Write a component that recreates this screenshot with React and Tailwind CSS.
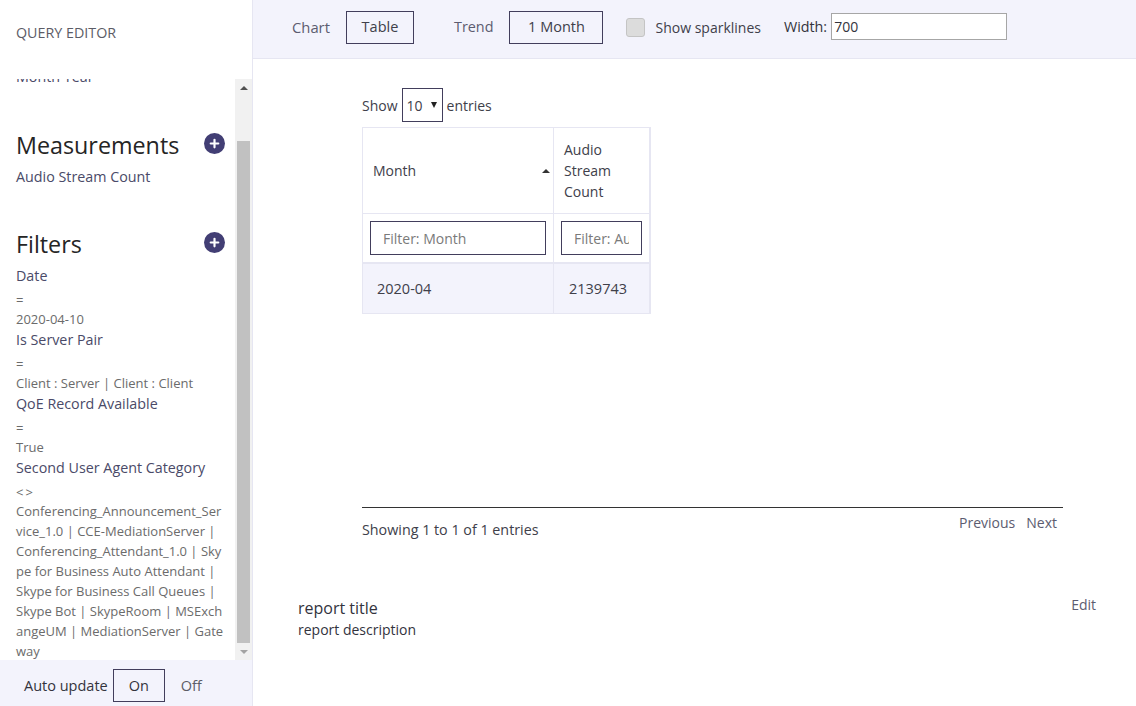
import { Plus } from 'lucide-react'

const font = { fontFamily: '"Open Sans", "Noto Sans", sans-serif' }

const filters = [
  { name: 'Date', op: '=', lines: ['2020-04-10'] },
  { name: 'Is Server Pair', op: '=', lines: ['Client : Server | Client : Client'] },
  { name: 'QoE Record Available', op: '=', lines: ['True'] },
  {
    name: 'Second User Agent Category',
    op: '<>',
    lines: [
      'Conferencing_Announcement_Ser',
      'vice_1.0 | CCE-MediationServer |',
      'Conferencing_Attendant_1.0 | Sky',
      'pe for Business Auto Attendant |',
      'Skype for Business Call Queues |',
      'Skype Bot | SkypeRoom | MSExch',
      'angeUM | MediationServer | Gate',
      'way',
    ],
  },
]

function AddButton() {
  return (
    <span className="flex h-[21px] w-[21px] items-center justify-center rounded-full bg-[#423e74]">
      <Plus className="h-[13px] w-[13px] text-white" strokeWidth={4} />
    </span>
  )
}

function Sidebar() {
  return (
    <aside className="flex h-full w-[253px] shrink-0 flex-col border-r border-[#e6e6f2] bg-white">
      <div className="h-[79px] shrink-0 pl-4 pt-[23px] text-[14.3px] leading-[20px] text-[#5c5c66]">QUERY EDITOR</div>
      <div className="flex min-h-0 flex-1">
        <div className="min-w-0 flex-1 overflow-hidden pl-4 pr-[7px]">
          <div className="-mt-[12px] text-[14.3px] leading-[20px] text-[#4a4a68]">Month Year</div>
          <div className="mt-[42px] flex items-center justify-between pr-[3px]">
            <h2 className="text-[23.3px] leading-[32px] text-[#252525]">Measurements</h2>
            <span className="-mt-[4px]"><AddButton /></span>
          </div>
          <div className="mt-[6px] text-[14.3px] leading-[20px] text-[#4a4a68]">Audio Stream Count</div>
          <div className="mt-[41px] flex items-center justify-between pr-[3px]">
            <h2 className="text-[23.3px] leading-[32px] text-[#252525]">Filters</h2>
            <span className="-mt-[4px]"><AddButton /></span>
          </div>
          <div className="mt-[6px]">
            {filters.map((f) => (
              <div key={f.name}>
                <div className="text-[14.3px] leading-[20px] text-[#4a4a68]">{f.name}</div>
                <div className="mt-[4px] text-[13px] leading-[20px] tracking-[2px] text-[#6b6b6b]">{f.op}</div>
                <div className="-mt-px mb-px">
                  {f.lines.map((line) => (
                    <div key={line} className="whitespace-nowrap text-[13px] leading-[20px] text-[#6b6b6b]">{line}</div>
                  ))}
                </div>
              </div>
            ))}
          </div>
        </div>
        <div className="flex w-[17px] shrink-0 flex-col bg-[#f1f1f1]">
          <div className="flex h-[17px] items-center justify-center">
            <span className="h-0 w-0 border-x-[4px] border-b-[4px] border-x-transparent border-b-[#505050]" />
          </div>
          <div className="mx-[2px] mt-[45px] flex-1 bg-[#c1c1c1]" />
          <div className="flex h-[17px] items-center justify-center">
            <span className="h-0 w-0 border-x-[4px] border-t-[4px] border-x-transparent border-t-[#a3a3a3]" />
          </div>
        </div>
      </div>
      <div className="flex h-[46px] shrink-0 items-center bg-[#f3f3fc] pl-[24px] pt-[5px] text-[14.5px] text-[#33333d]">
        <span>Auto update</span>
        <span className="ml-[5px] flex h-[33px] w-[52px] items-center justify-center border border-[#423e5c]">On</span>
        <span className="ml-[16px] text-[#5c5c66]">Off</span>
      </div>
    </aside>
  )
}

function Toolbar() {
  return (
    <div className="flex h-[59px] shrink-0 items-center border-b border-[#e6e6f2] bg-[#f3f3fc] pb-[4px] pl-[39px] text-[14px] text-[#5c5c70]">
      <span className="text-[14.8px]">Chart</span>
      <span className="ml-[16px] flex h-[33px] w-[68px] items-center justify-center border border-[#423e5c] text-[14.5px] text-[#40404a]">Table</span>
      <span className="ml-[40px] text-[14.4px]">Trend</span>
      <span className="ml-[16px] flex h-[33px] w-[94px] items-center justify-center border border-[#423e5c] text-[14.5px] text-[#40404a]">1 Month</span>
      <span className="ml-[23px] h-[19px] w-[19px] rounded-[3px] border border-[#c4c4c4] bg-[#dcdcdc]" />
      <span className="ml-[10px] text-[#40404a]">Show sparklines</span>
      <span className="ml-[23px] text-[14.3px] text-[#33333d]">Width:</span>
      <input
        readOnly
        value="700"
        className="-mt-[2px] ml-[4px] h-[27px] w-[176px] border border-[#a6a6a6] bg-white px-[2px] text-[14px] text-[#33333d]"
      />
    </div>
  )
}

function DataTable() {
  return (
    <div className="mt-[5px] w-[289px] border border-r-2 border-[#e6e6f2] text-[14px] text-[#40404a]">
      <div className="flex h-[86px] border-b border-[#e6e6f2]">
        <div className="flex w-[191px] items-center justify-between border-r border-[#e6e6f2] pl-[10px] pr-[3px]">
          <span>Month</span>
          <span className="h-0 w-0 border-x-[4px] border-b-[4px] border-x-transparent border-b-[#333]" />
        </div>
        <div className="flex flex-1 items-center pl-[10px] leading-[21px]">
          <span>Audio<br />Stream<br />Count</span>
        </div>
      </div>
      <div className="flex h-[50px] border-b-2 border-[#e6e6f2]">
        <div className="flex w-[191px] items-center border-r border-[#e6e6f2] pl-[7px]">
          <input readOnly placeholder="Filter: Month" className="h-[34px] w-[176px] border border-[#423e5c] px-[12px] placeholder:text-[#7a7a7a]" />
        </div>
        <div className="flex flex-1 items-center pl-[7px]">
          <input readOnly placeholder="Filter: Audio Stream Count" className="h-[34px] w-[81px] border border-[#423e5c] px-[12px] placeholder:text-[#7a7a7a]" />
        </div>
      </div>
      <div className="flex h-[49px] bg-[#f3f3fc] text-[14.5px]">
        <div className="flex w-[191px] items-center border-r border-[#e6e6f2] pl-[14px]">2020-04</div>
        <div className="flex flex-1 items-center pl-[15px]">2139743</div>
      </div>
    </div>
  )
}

export default function App() {
  return (
    <div className="flex h-[706px] w-[1136px] overflow-hidden bg-white" style={font}>
      <Sidebar />
      <main className="flex min-w-0 flex-1 flex-col">
        <Toolbar />
        <div className="flex flex-1 flex-col pl-[45px] pr-[40px]">
          <div className="ml-[64px] w-[701px] pt-[29px]">
            <div className="flex items-center text-[14px] text-[#40404a]">
              <span>Show</span>
              <span className="ml-[4px] flex h-[34px] w-[41px] items-center justify-between border border-[#423e5c] pl-[4px] pr-[5px]">
                10
                <span className="h-0 w-0 border-x-[3.5px] border-t-[6px] border-x-transparent border-t-[#222]" />
              </span>
              <span className="ml-[4px]">entries</span>
            </div>
            <DataTable />
            <div className="mt-[193px] flex justify-between border-t border-[#333] text-[14px] text-[#40404a]">
              <span className="pt-[11px] text-[14.3px]">Showing 1 to 1 of 1 entries</span>
              <span className="flex gap-[11px] pr-[6px] pt-[4px] text-[#5c5c70]">
                <span>Previous</span>
                <span>Next</span>
              </span>
            </div>
          </div>
          <div className="mt-[57px] flex justify-between">
            <div className="text-[#33333d]">
              <div className="text-[16px] leading-[22px]">report title</div>
              <div className="text-[14px] leading-[22px]">report description</div>
            </div>
            <span className="-mt-[3px] text-[14px] leading-[22px] text-[#5c5c70]">Edit</span>
          </div>
        </div>
      </main>
    </div>
  )
}
